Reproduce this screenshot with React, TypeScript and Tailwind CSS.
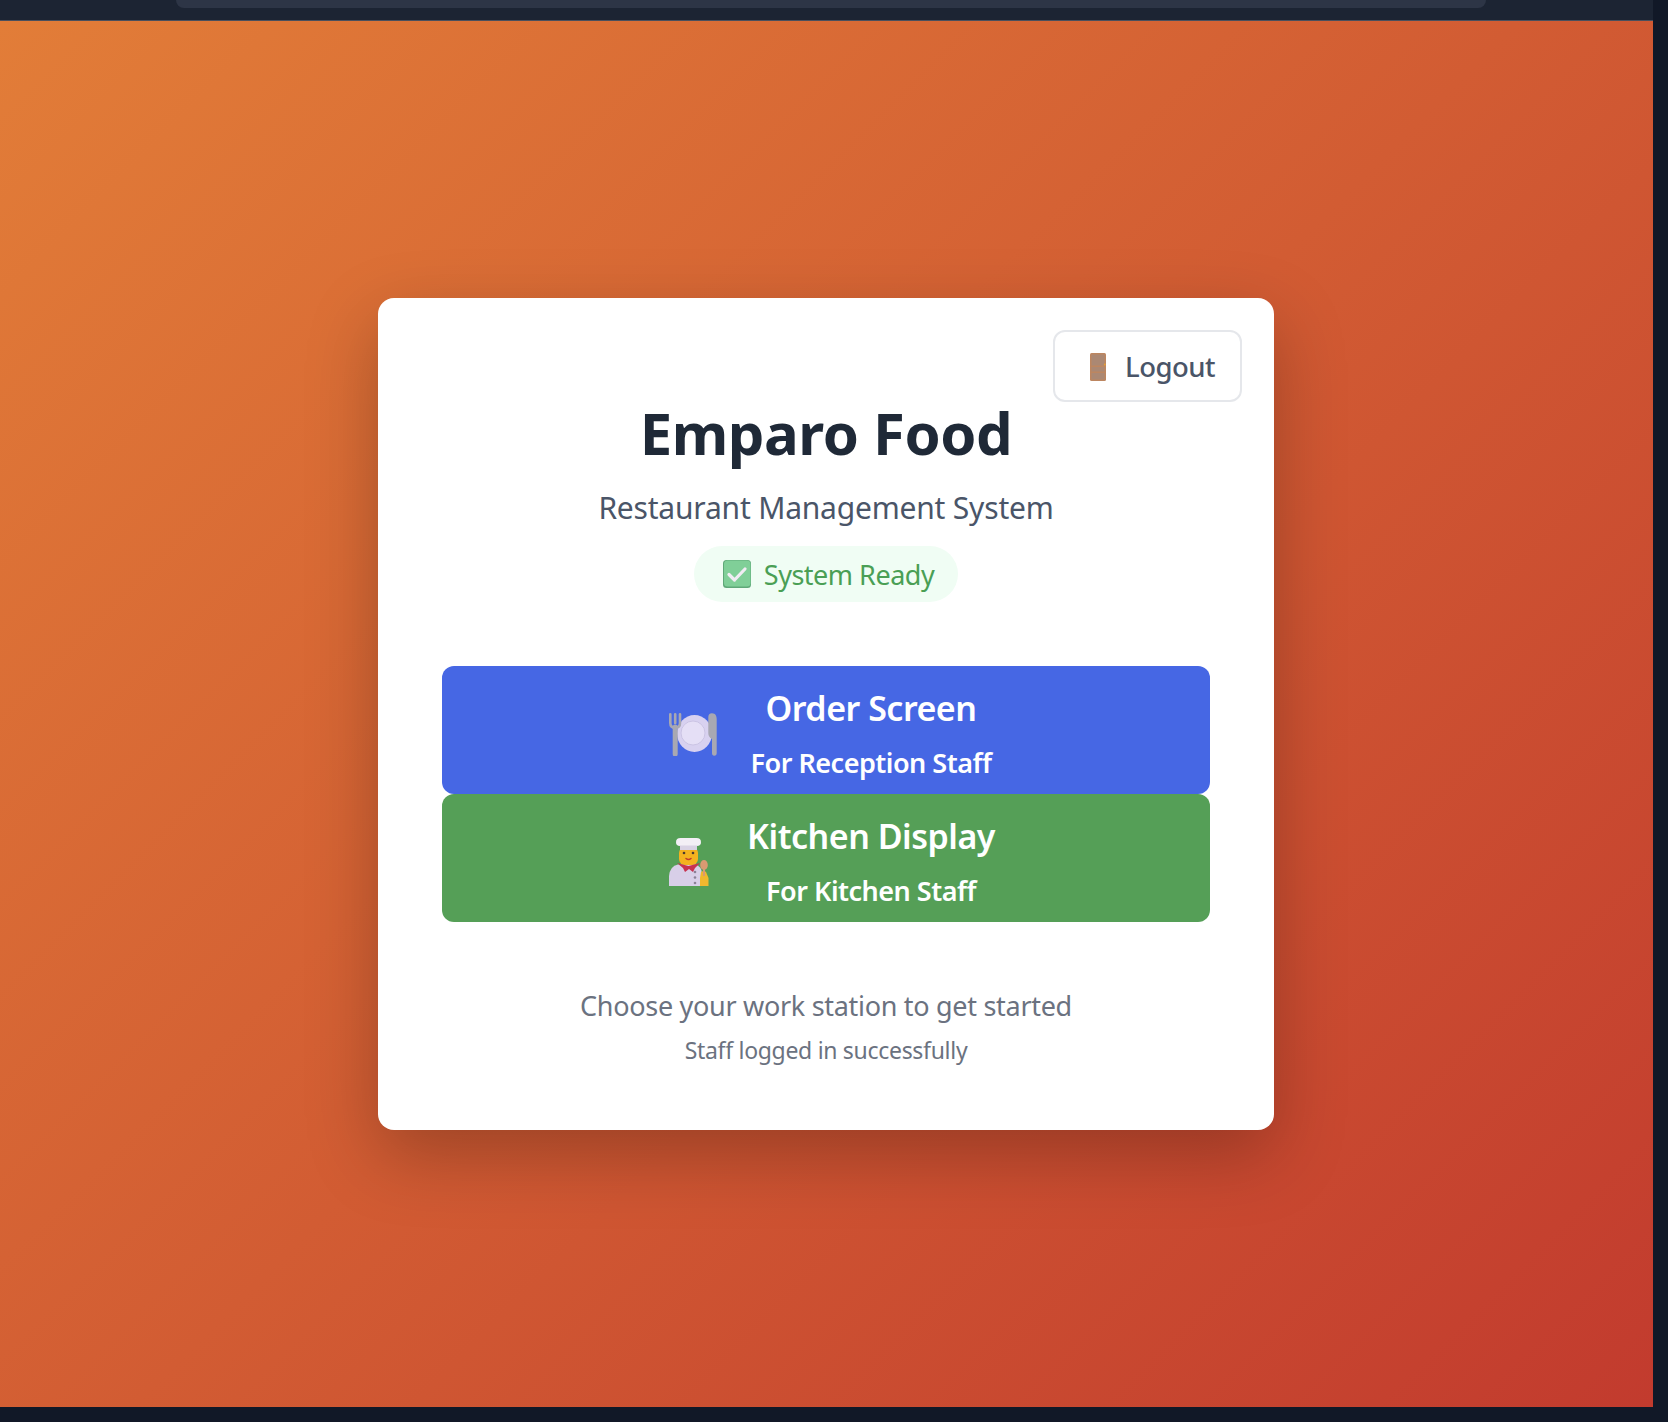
import React from "react";

const font = { fontFamily: '"Noto Sans", "Open Sans", sans-serif' };

function Door() {
  return (
    <svg width="16" height="28" viewBox="0 0 16 28" className="block mt-[2px]">
      <rect x="0" y="0" width="16" height="28" rx="1.5" fill="#bd8660" />
      <rect x="1.5" y="1.5" width="13" height="11" fill="#ab8873" />
      <rect x="1.5" y="14" width="13" height="4.5" fill="#ab8873" />
      <rect x="1.5" y="20" width="13" height="6.5" fill="#ab8873" />
      <circle cx="14.8" cy="11.5" r="0.9" fill="#e8a030" />
    </svg>
  );
}

function Check() {
  return (
    <svg width="28" height="28" viewBox="0 0 28 28" className="block">
      <rect x="0" y="0" width="28" height="28" rx="3.5" fill="#5fa878" />
      <rect x="1" y="0.5" width="26.5" height="26" rx="3.5" fill="#80cf98" />
      <path d="M6 14.5 L11.5 20 L22 9" fill="none" stroke="#f1ecf4" strokeWidth="3.2" strokeLinecap="round" strokeLinejoin="round" />
    </svg>
  );
}

function Plate() {
  return (
    <svg width="48" height="43" viewBox="0 0 48 43" className="block">
      <ellipse cx="25.5" cy="20.5" rx="17.5" ry="18.5" fill="#d8d1f0" />
      <circle cx="24" cy="20" r="12" fill="#e5dff6" stroke="#cbc4e4" strokeWidth="1" />
      <path d="M6.2 14 L6.2 41" stroke="#a8a8b2" strokeWidth="5" strokeLinecap="round" />
      <path d="M1.3 1.3 V10 Q1.3 14.5 6.2 15 Q11 14.5 11 10 V1.3 M6.2 1.3 V10" fill="none" stroke="#a8a8b2" strokeWidth="2.6" strokeLinecap="round" />
      <path d="M43 0.2 C46.5 0.2 47.7 3 47.7 6 V40 Q47.7 42.8 45.2 42.8 Q43 42.8 43 40 V26 Q39.3 24 39.3 20 V4 Q39.3 0.2 43 0.2 Z" fill="#a8a8b2" />
    </svg>
  );
}

function Chef() {
  return (
    <svg width="40" height="48" viewBox="0 0 40 48" className="block -mt-[1px]">
      <path d="M0 48 V38 Q1 28 9 26.5 L26 26.5 Q33 28 33 36 V48 Z" fill="#d8cfe8" />
      <path d="M32 34 Q35 32 37 34 L39.5 40 V48 H31 V40 Z" fill="#f0b82e" />
      <ellipse cx="35" cy="27" rx="3.8" ry="5" fill="#d99a72" />
      <rect x="34" y="30" width="2" height="8" fill="#d99a72" />
      <rect x="10" y="9" width="19" height="18" rx="6" fill="#f4b21f" />
      <circle cx="15" cy="15" r="1.3" fill="#4a3a30" />
      <circle cx="24" cy="15" r="1.3" fill="#4a3a30" />
      <path d="M17 20.5 Q19.5 22.5 22 20.5" fill="none" stroke="#c23a2a" strokeWidth="1.5" strokeLinecap="round" />
      <path d="M8 25 L19.5 28 L31 25 L26 30 L24 34 L20 31 L16 34 L14 30 Z" fill="#c8324f" />
      <path d="M11 12 V8 Q7 8 7 4.2 Q7 0 11.5 0 H27.5 Q32 0 32 4.2 Q32 8 28 8 V12 Z" fill="#f3eff6" />
      <rect x="11" y="7.5" width="17" height="4.5" fill="#d9d2e4" />
      <circle cx="26" cy="34" r="1.3" fill="#8b8296" />
      <circle cx="26" cy="39.5" r="1.3" fill="#8b8296" />
      <circle cx="26" cy="45" r="1.3" fill="#8b8296" />
    </svg>
  );
}

function Station({ bg, icon, title, sub }: { bg: string; icon: React.ReactNode; title: string; sub: string }) {
  return (
    <button className={`${bg} h-[128px] w-full rounded-xl flex items-center pl-[227px] text-white`}>
      <span className="w-[48px] flex-none pt-[8px]">{icon}</span>
      <span className="w-[308px] flex-none flex flex-col items-center pt-[5px]">
        <span className="text-[34px] leading-[46px] font-semibold tracking-[-0.5px] mb-[14px]">{title}</span>
        <span className="text-[27px] leading-[36px] font-semibold tracking-[-0.5px]">{sub}</span>
      </span>
    </button>
  );
}

export default function App() {
  return (
    <div style={font} className="h-[1422px] w-[1668px] overflow-hidden bg-[#111827] flex flex-col">
      <div className="w-[1653px] h-[1407px] flex flex-col">
        <div className="h-[21px] flex-none bg-[#1c2433] border-b border-[#4a4f5c] flex justify-center">
          <div className="w-[1310px] h-[8px] bg-[#2d3546] rounded-b-xl mr-[-8px]" />
        </div>
        <main className="flex-1 flex items-center justify-center pr-[1px] [background-image:linear-gradient(135deg,#e27d38,#c23b2e)]">
          <div className="relative w-[896px] h-[832px] bg-white rounded-2xl shadow-[0_25px_70px_rgba(0,0,0,0.25)] px-[64px] pt-[96px] flex flex-col items-center">
            <button className="absolute top-[32px] right-[32px] w-[189px] h-[72px] border-2 border-[#e5e7eb] rounded-xl flex items-center pl-[35px] gap-[19px] text-[#4a5568] text-[27.5px] font-[550] tracking-[-0.5px]">
              <Door />
              <span className="mt-[1px]">Logout</span>
            </button>
            <h1 className="text-[58px] leading-[78px] font-bold text-[#1f2937] tracking-[-0.45px]">Emparo Food</h1>
            <p className="text-[30px] leading-[42px] text-[#4a5568] mt-[15px] tracking-[-0.2px]">Restaurant Management System</p>
            <div className="mt-[17px] h-[56px] w-[264px] rounded-full bg-[#f0fdf4] flex items-center justify-center gap-[13px] pl-[5px] text-[#4a9f55] text-[27px] tracking-[-0.5px]">
              <Check />
              <span className="mt-[2px]">System Ready</span>
            </div>
            <div className="w-full mt-[64px] flex flex-col">
              <Station bg="bg-[#4667e4]" icon={<Plate />} title="Order Screen" sub="For Reception Staff" />
              <Station bg="bg-[#559f57]" icon={<Chef />} title="Kitchen Display" sub="For Kitchen Staff" />
            </div>
            <p className="mt-[65px] text-[27px] leading-[38px] text-[#6b7280] tracking-[-0.3px]">Choose your work station to get started</p>
            <p className="mt-[9px] text-[23px] leading-[32px] text-[#6b7280] tracking-[-0.3px]">Staff logged in successfully</p>
          </div>
        </main>
      </div>
    </div>
  );
}
